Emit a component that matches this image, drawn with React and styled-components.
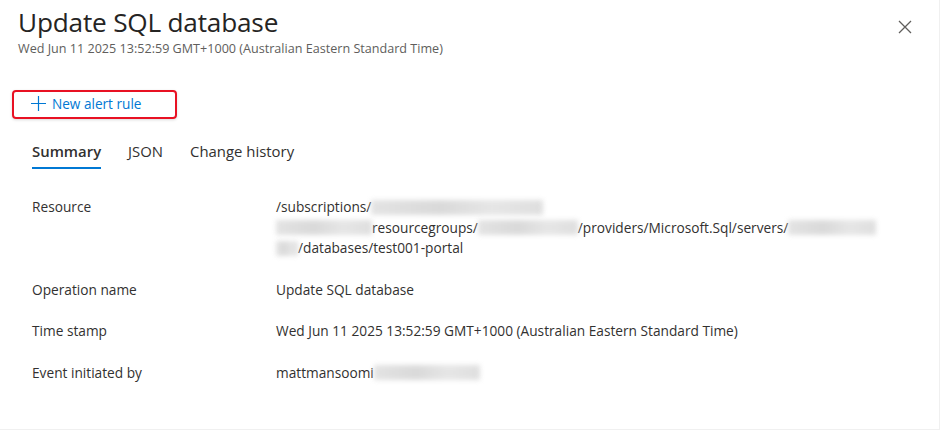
import React from 'react';
import styled, { createGlobalStyle } from 'styled-components';

const GlobalStyle = createGlobalStyle`
  html, body {
    margin: 0;
    padding: 0;
    background: #ffffff;
  }
  body {
    font-family: "Segoe UI", "Open Sans", "Noto Sans", sans-serif;
    color: #323130;
  }
`

function Blur({ w }) {
  return <Smudge w={w} />;
}

const rows = [
  { label: 'Operation name', value: 'Update SQL database' },
  { label: 'Time stamp', value: 'Wed Jun 11 2025 13:52:59 GMT+1000 (Australian Eastern Standard Time)' },
];

function App() {
  return (
    <Panel>
      <GlobalStyle />
      <Header>
        <div>
          <Title>Update SQL database</Title>
          <Subtitle>Wed Jun 11 2025 13:52:59 GMT+1000 (Australian Eastern Standard Time)</Subtitle>
        </div>
        <CloseButton aria-label="Close">
          <svg width="16" height="16" viewBox="0 0 16 16">
            <path d="M2 2 L14 14 M14 2 L2 14" stroke="#605e5c" strokeWidth="1.3" fill="none" />
          </svg>
        </CloseButton>
      </Header>

      <Toolbar>
        <AlertButton>
          <svg width="17" height="17" viewBox="0 0 17 17">
            <path d="M8.5 1 V16 M1 8.5 H16" stroke="#0078d4" strokeWidth="1.2" fill="none" />
          </svg>
          New alert rule
        </AlertButton>
      </Toolbar>

      <Tabs>
        <Tab active>Summary</Tab>
        <Tab>JSON</Tab>
        <Tab>Change history</Tab>
      </Tabs>

      <Details>
        <Row>
          <Label>Resource</Label>
          <Value>
            <Line>/subscriptions/<Blur w={172} /></Line>
            <Line><Blur w={96} />resourcegroups/<Blur w={100} />/providers/Microsoft.Sql/servers/<Blur w={88} /></Line>
            <Line><Blur w={22} />/databases/test001-portal</Line>
          </Value>
        </Row>
        {rows.map(r => (
          <Row key={r.label}>
            <Label>{r.label}</Label>
            <Value><Line>{r.value}</Line></Value>
          </Row>
        ))}
        <Row>
          <Label>Event initiated by</Label>
          <Value><Line>mattmansoomi<Blur w={106} /></Line></Value>
        </Row>
      </Details>
    </Panel>
  );
}

export default App;

const Panel = styled.div`
  width: 940px;
  height: 430px;
  box-sizing: border-box;
  border-right: 1px solid #f0f0f0;
  border-bottom: 1px solid #f0f0f0;
  background: #ffffff;
  overflow: hidden;
`

const Header = styled.div`
  display: flex;
  justify-content: space-between;
  align-items: flex-start;
  padding: 4px 26px 0 18px;
`

const Title = styled.h1`
  margin: 0;
  font-size: 26.2px;
  font-weight: 400;
  line-height: 36px;
  color: #252423;
  letter-spacing: -0.2px;
`

const Subtitle = styled.div`
  font-size: 12.6px;
  line-height: 17px;
  color: #605e5c;
`

const CloseButton = styled.div`
  margin-top: 15px;
  width: 16px;
  height: 16px;
  display: flex;
`

const Toolbar = styled.div`
  padding: 33px 0 0 12px;
`

const AlertButton = styled.div`
  display: inline-flex;
  align-items: center;
  gap: 5px;
  box-sizing: border-box;
  width: 165px;
  height: 29px;
  padding: 0 0 2px 16px;
  border: 2px solid #e81123;
  border-radius: 4px;
  box-shadow: 0 1px 3px rgba(0, 0, 0, 0.15);
  color: #0078d4;
  font-size: 13.6px;
`

const Tabs = styled.div`
  display: flex;
  gap: 27px;
  padding: 21px 0 0 32px;
`

const Tab = styled.div`
  font-size: 14.9px;
  line-height: 22px;
  padding-bottom: 5px;
  color: #323130;
  font-weight: ${p => (p.active ? 600 : 400)};
  border-bottom: 2px solid ${p => (p.active ? '#0078d4' : 'transparent')};
`

const Details = styled.div`
  padding: 28px 0 0 32px;
`

const Row = styled.div`
  display: grid;
  grid-template-columns: 244px 1fr;
  padding-bottom: 21px;
  font-size: 13.7px;
  color: #323130;
`

const Label = styled.div`
  line-height: 20.5px;
`

const Value = styled.div`
  display: flex;
  flex-direction: column;
`

const Line = styled.div`
  line-height: 20.5px;
  white-space: nowrap;
  display: flex;
  align-items: center;
`

const Smudge = styled.span`
  display: inline-block;
  width: ${p => p.w}px;
  height: 15px;
  background: linear-gradient(90deg, #dadada, #cdcdcd 40%, #dedede 70%, #d4d4d4);
  filter: blur(2.5px);
  opacity: 0.75;
`
